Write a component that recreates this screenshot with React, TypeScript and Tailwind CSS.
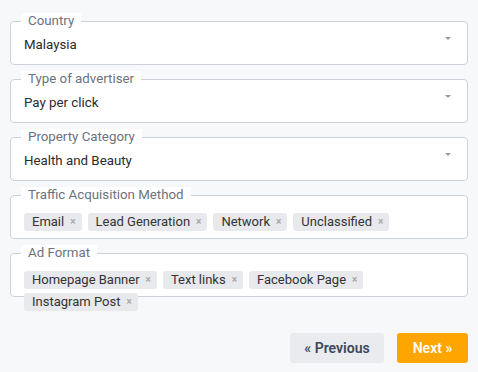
const font = { fontFamily: "Roboto, 'Liberation Sans', sans-serif" };

const Arrow = () => (
  <span className="mt-[1px] h-0 w-0 border-x-[3px] border-t-[3px] border-x-transparent border-t-[#999]" />
);

const Chip = ({ label }: { label: string }) => (
  <span className="flex h-[18px] items-center gap-[6px] rounded-[3px] bg-[#e8e9ec] pl-[8px] pr-[6px] text-[13px] leading-[18px] text-[#333]">
    {label}
    <span className="text-[10px] font-bold leading-none text-[#a8a8a8]">×</span>
  </span>
);

const Field = ({ label, children }: { label: string; children: React.ReactNode }) => (
  <fieldset className="mb-[6px] h-[52px] rounded-[4px] border border-[#cdd1d9] bg-white px-0 pb-0 pt-0">
    <legend className="ml-[10px] bg-white px-[7px] text-[13.3px] leading-[16px] text-[#6b7280]">{label}</legend>
    {children}
  </fieldset>
);

const SelectField = ({ label, value }: { label: string; value: string }) => (
  <Field label={label}>
    <div className="flex items-start justify-between pl-[13px] pr-[16px] pt-[7px]">
      <span className="text-[13.3px] leading-[18px] text-[#2b2b2b]">{value}</span>
      <Arrow />
    </div>
  </Field>
);

const ChipField = ({ label, items }: { label: string; items: string[] }) => (
  <Field label={label}>
    <div className="flex flex-wrap gap-x-[6px] gap-y-[4px] pl-[13px] pr-[15px] pt-[10px]">
      {items.map((i) => (
        <Chip key={i} label={i} />
      ))}
    </div>
  </Field>
);

export default function App() {
  return (
    <div className="min-h-screen bg-[#f7f8fa] px-[10px] pt-[13px]" style={font}>
      <SelectField label="Country" value="Malaysia" />
      <SelectField label="Type of advertiser" value="Pay per click" />
      <SelectField label="Property Category" value="Health and Beauty" />
      <ChipField
        label="Traffic Acquisition Method"
        items={["Email", "Lead Generation", "Network", "Unclassified"]}
      />
      <ChipField
        label="Ad Format"
        items={["Homepage Banner", "Text links", "Facebook Page", "Instagram Post"]}
      />
      <div className="mt-[36px] flex justify-end gap-[13px]">
        <button className="h-[30px] w-[94px] rounded-[3px] bg-[#e9ebef] text-[14px] font-semibold text-[#3d475c]">
          « Previous
        </button>
        <button className="h-[30px] w-[71px] rounded-[3px] bg-[#ffa500] text-[14px] font-semibold text-white">
          Next »
        </button>
      </div>
    </div>
  );
}
